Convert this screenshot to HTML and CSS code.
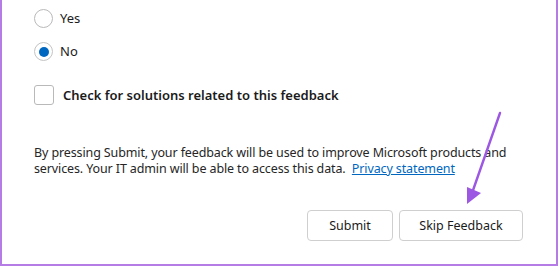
FILE: index.html
```html
<!DOCTYPE html>
<html>
<head>
<meta charset="utf-8">
<link rel="stylesheet" href="styles.css">
</head>
<body>
<div class="frame">
  <div class="options">
    <label class="option">
      <span class="radio"></span>
      <span class="label">Yes</span>
    </label>
    <label class="option option-no">
      <span class="radio checked"><span class="dot"></span></span>
      <span class="label">No</span>
    </label>
    <label class="option option-check">
      <span class="checkbox"></span>
      <span class="label strong">Check for solutions related to this feedback</span>
    </label>
  </div>
  <p class="notice">By pressing Submit, your feedback will be used to improve Microsoft products and<br>services. Your IT admin will be able to access this data. &nbsp;<a href="#" class="link">Privacy statement</a></p>
  <div class="actions">
    <button class="btn btn-submit">Submit</button>
    <button class="btn btn-skip">Skip Feedback</button>
  </div>
  <svg class="arrow" width="60" height="110" viewBox="0 0 60 110">
    <line x1="42" y1="3" x2="13" y2="86" stroke="#9c57e3" stroke-width="2.4" stroke-linecap="round"/>
    <polygon points="9,94 9,77 23,83" fill="#9c57e3"/>
  </svg>
</div>
</body>
</html>
```
FILE: styles.css
```css
html, body {
  margin: 0;
  padding: 0;
  background: #ffffff;
}
body {
  font-family: "Noto Sans", "Open Sans", sans-serif;
  color: #1b1b1b;
}
.frame {
  position: relative;
  width: 558px;
  height: 266px;
  box-sizing: border-box;
  border-left: 2px solid #b57ce6;
  border-right: 2px solid #b57ce6;
  border-bottom: 2px solid #b57ce6;
  padding: 9px 0 0 32px;
}
.options {
  display: flex;
  flex-direction: column;
}
.option {
  display: flex;
  align-items: center;
  height: 19px;
  font-size: 13px;
}
.option-no {
  margin-top: 14px;
}
.option-check {
  margin-top: 24px;
  height: 20px;
}
.radio {
  width: 19px;
  height: 19px;
  box-sizing: border-box;
  border: 1px solid #b9b9b9;
  border-radius: 50%;
  display: flex;
  align-items: center;
  justify-content: center;
  margin-right: 7px;
}
.radio.checked {
  border-color: #c4c4c4;
}
.dot {
  width: 10px;
  height: 10px;
  border-radius: 50%;
  background: #0067c0;
}
.checkbox {
  width: 20px;
  height: 20px;
  box-sizing: border-box;
  border: 1px solid #b9b9b9;
  border-radius: 3px;
  margin-right: 9px;
}
.label {
  line-height: 19px;
}
.strong {
  font-weight: 600;
}
.notice {
  margin: 40px 0 0 0;
  font-size: 12.5px;
  letter-spacing: -0.12px;
  line-height: 16px;
  color: #262626;
  white-space: nowrap;
}
.link {
  color: #0067c0;
  text-decoration: underline;
}
.actions {
  display: flex;
  justify-content: flex-end;
  gap: 6px;
  margin-top: 33px;
  padding-right: 33px;
}
.btn {
  height: 31px;
  box-sizing: border-box;
  border: 1px solid #cfcfcf;
  border-radius: 4px;
  background: #ffffff;
  font-family: inherit;
  font-size: 12.5px;
  color: #1b1b1b;
  padding: 0;
}
.btn-submit {
  width: 86px;
}
.btn-skip {
  width: 124px;
}
.arrow {
  position: absolute;
  left: 456px;
  top: 110px;
  overflow: visible;
}
```
